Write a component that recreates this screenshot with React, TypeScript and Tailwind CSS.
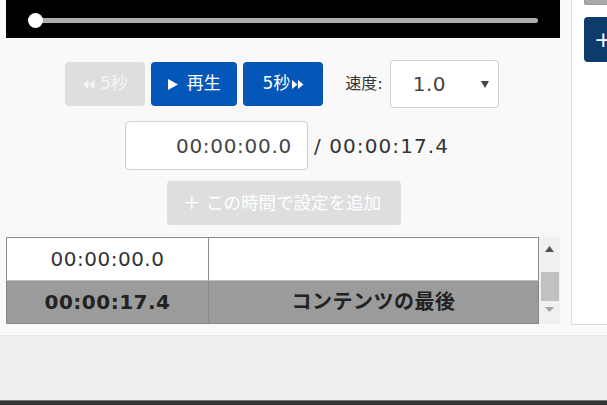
import React from 'react';

const font = { fontFamily: "'DejaVu Sans', 'Noto Sans CJK JP', sans-serif" };

function Rewind() {
  return (
    <svg width="12" height="9" viewBox="0 0 12 9" className="inline-block">
      <polygon points="5.5,0 5.5,9 0,4.5" fill="currentColor" />
      <polygon points="11.5,0 11.5,9 6,4.5" fill="currentColor" />
    </svg>
  );
}

function Forward() {
  return (
    <svg width="12" height="9" viewBox="0 0 12 9" className="inline-block">
      <polygon points="0,0 0,9 5.5,4.5" fill="currentColor" />
      <polygon points="6,0 6,9 11.5,4.5" fill="currentColor" />
    </svg>
  );
}

export default function App() {
  return (
    <div className="w-[607px] h-[405px] bg-[#eeeeee] flex flex-col overflow-hidden" style={font}>
      <div className="h-[336px] shrink-0 bg-[#f9f9f9] flex border-b border-[#e8e8e8]">
        {/* player column */}
        <div className="w-[571px] shrink-0 pl-[6px] pr-[11px]">
          <div className="h-[38px] bg-black flex items-center pl-[29px] pr-[22px]">
            <div className="relative flex-1 h-[5px] rounded-full bg-[#adadad] mt-[2px]">
              <div className="absolute -left-[7px] -top-[5px] w-[15px] h-[15px] rounded-full bg-white" />
            </div>
          </div>

          <div className="mt-[22px] flex items-center justify-center pr-[2px]">
            <button className="w-[80px] h-[44px] rounded-[4px] bg-[#dedede] text-[#f4f4f4] text-[17px] flex items-center justify-center gap-[5px]">
              <Rewind /> 5秒
            </button>
            <button className="ml-[6px] w-[86px] h-[44px] rounded-[4px] bg-[#0457b8] text-white text-[17px] flex items-center justify-center gap-[9px]">
              <svg width="10" height="11" viewBox="0 0 10 11"><polygon points="0,0 0,11 10,5.5" fill="white" /></svg>
              再生
            </button>
            <button className="ml-[6px] w-[80px] h-[44px] rounded-[4px] bg-[#0457b8] text-white text-[17px] flex items-center justify-center gap-[2px]">
              5秒 <Forward />
            </button>
            <span className="ml-[22px] text-[16px] text-[#333]">速度:</span>
            <div className="ml-[7px] w-[109px] h-[48px] rounded-[4px] border border-[#cfcfcf] bg-white flex items-center pl-[22px] pr-[9px]">
              <span className="flex-1 text-[20px] text-[#444] tracking-[0.5px]">1.0</span>
              <svg width="8" height="7" viewBox="0 0 8 7"><polygon points="0,0 8,0 4,7" fill="#444" /></svg>
            </div>
          </div>

          <div className="mt-[13px] flex items-center justify-center pl-[8px]">
            <div className="w-[183px] h-[49px] rounded-[4px] border border-[#c9cfd6] bg-white flex items-center justify-end pr-[15px] text-[20px] text-[#444] tracking-[0.7px]">
              00:00:00.0
            </div>
            <span className="ml-[6px] text-[20px] text-[#333] tracking-[1.1px]">/ 00:00:17.4</span>
          </div>

          <div className="mt-[11px] flex justify-center pl-[2px]">
            <button className="w-[234px] h-[44px] rounded-[4px] bg-[#dedede] text-white text-[17.5px] flex items-center justify-center pr-[4px]">
              ＋ この時間で設定を追加
            </button>
          </div>

          <div className="mt-[12px] flex h-[87px]">
            <table className="w-[533px] border-collapse border border-[#888] text-[20px] tracking-[0.5px]">
              <tbody>
                <tr className="h-[43px] bg-white text-[#333]">
                  <td className="w-[202px] border border-[#8c8c8c] border-b-[#bbbbbb] text-center">00:00:00.0</td>
                  <td className="border border-[#8c8c8c] border-b-[#bbbbbb]"></td>
                </tr>
                <tr className="h-[43px] bg-[#9b9b9b] text-[#222] font-bold">
                  <td className="border border-[#888] text-center">00:00:17.4</td>
                  <td className="border border-[#888] text-center">コンテンツの最後</td>
                </tr>
              </tbody>
            </table>
            <div className="w-[21px] bg-[#f0f0f0] flex flex-col items-center">
              <svg width="9" height="6" viewBox="0 0 9 6" className="mt-[9px]"><polygon points="0,6 9,6 4.5,0" fill="#505050" /></svg>
              <div className="mt-[20px] w-[18px] h-[29px] bg-[#c1c1c1]" />
              <svg width="9" height="5" viewBox="0 0 9 5" className="mt-[6px]"><polygon points="0,0 9,0 4.5,5" fill="#a3a3a3" /></svg>
            </div>
          </div>
        </div>

        {/* side panel */}
        <div className="flex-1 h-[325px] bg-white border-l border-b border-[#dcdcdc] pl-[12px]">
          <div className="h-[5px] bg-[#a9a9a9] border border-[#9a9a9a] border-t-0 rounded-bl-[2px]" />
          <div className="mt-[12px] h-[45px] bg-[#0d3b6c] rounded-l-[4px] flex items-center pl-[10px] text-white text-[22px]">
            +
          </div>
        </div>
      </div>

      <div className="flex-1" />
      <div className="h-[1px] bg-[#777]" />
      <div className="h-[4px] bg-[#333]" />
    </div>
  );
}
